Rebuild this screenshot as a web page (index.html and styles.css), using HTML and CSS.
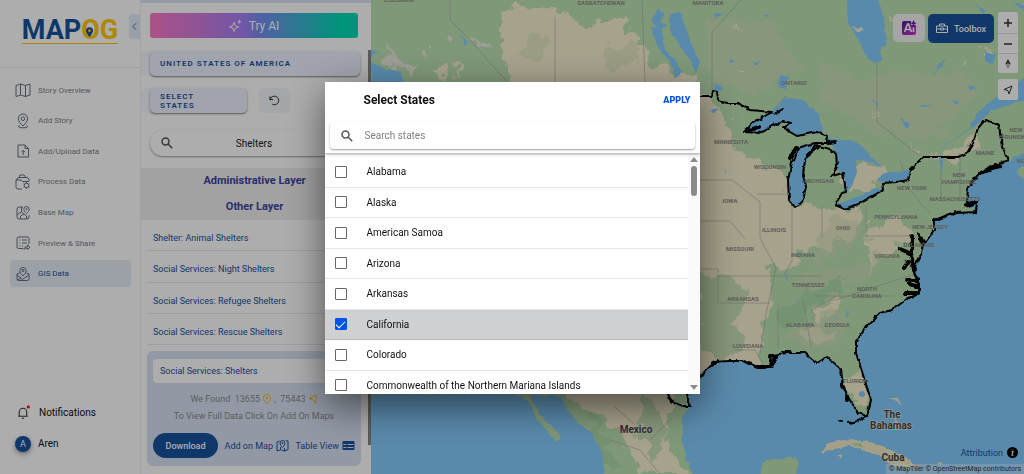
FILE: index.html
```html
<!DOCTYPE html>
<html lang="en">
<head>
<meta charset="utf-8">
<meta name="viewport" content="width=device-width, initial-scale=1">
<title>MAPOG - GIS Data</title>
<link rel="stylesheet" href="styles.css">
</head>
<body>
<div class="app">
  <aside class="sidebar">
    <div class="brand">
      <a class="logo" href="#"><span>MAP</span><span class="logo-og">OG</span>
        <svg class="logo-pin" viewBox="0 0 8 11"><path d="M4 0a4 4 0 0 0-4 4c0 3 4 7 4 7s4-4 4-7a4 4 0 0 0-4-4z" fill="#19519c"/><circle cx="4" cy="4" r="1.6" fill="#ffc800"/></svg>
      </a>
      <button class="collapse" aria-label="Collapse menu"><svg viewBox="0 0 6 10"><path d="M5 1 1 5l4 4"/></svg></button>
    </div>
    <nav class="menu">
      <a href="#" class="menu-item"><svg viewBox="0 0 16 16"><path d="M1 3.500 5.500 2v11L1 14.500zM5.500 2l5 1.500v11l-5-1.500M10.500 3.500 15 2v11l-4.500 1.500"/></svg>Story Overview</a>
      <a href="#" class="menu-item"><svg viewBox="0 0 16 16"><path d="M8 13C5 10 3.300 8 3.300 5.700a4.700 4.700 0 0 1 9.400 0C12.700 8 11 10 8 13z"/><circle cx="8" cy="5.700" r="1.800"/><path d="M5 12.500c-3 .8-2 2.300 3 2.300s6-1.500 3-2.300"/></svg>Add Story</a>
      <a href="#" class="menu-item"><svg viewBox="0 0 16 16"><path d="M3 2h7l3.500 3.500V14H3zM10 2v3.500h3.500M8.200 12V7.500M6.300 9.200l1.900-1.900 1.900 1.900"/></svg>Add/Upload Data</a>
      <a href="#" class="menu-item"><svg viewBox="0 0 16 16"><path d="M7 15H3a2 2 0 0 1-2-2V6h5l1.500 1.500H14M2 6V4.500l2-1h8.500L14 5v2M4 3.500 5 1h4l2 2.500"/><circle cx="11.500" cy="11.500" r="2.300"/><path d="M11.500 8v1.200m0 4.600V15m-3-5.200 1 .600m4 2.300 1 .600m0-3.500-1 .600m-4 2.300-1 .600"/></svg>Process Data</a>
      <a href="#" class="menu-item"><svg viewBox="0 0 16 16"><path d="M8 2H4a2 2 0 0 0-2 2v8a2 2 0 0 0 2 2h8a2 2 0 0 0 2-2v-2M6.500 2v5L2 9.500M5.500 14v-3L9 9l2.500 2v3M6.500 7 9 9"/><path d="M11.500 8.500C10 7 8.800 6 8.800 4.200a2.700 2.700 0 0 1 5.400 0C14.200 6 13 7 11.500 8.500z"/><circle cx="11.500" cy="4.200" r=".6"/></svg>Base Map</a>
      <a href="#" class="menu-item"><svg viewBox="0 0 16 16"><path d="M8 13.500H3.500A1.500 1.500 0 0 1 2 12V3.500A1.500 1.500 0 0 1 3.500 2h9A1.500 1.500 0 0 1 14 3.500V9M4.500 5h1M4.500 8h1M4.500 11h1M7 5h5M7 8h5M7 11h1M9 14.500c0-2 1.500-3 3.500-3V10l2.500 2.200-2.500 2.200V13c-1.500 0-2.500.2-3.500 1.500z"/></svg>Preview &amp; Share</a>
      <a href="#" class="menu-item active"><svg viewBox="0 0 16 16"><path d="M8 10C6 8 4.800 6.500 4.800 4.700a3.200 3.200 0 0 1 6.400 0C11.200 6.500 10 8 8 10z"/><circle cx="8" cy="4.500" r="1"/><path d="M4.500 7 2 8v5a1.500 1.500 0 0 0 1.500 1.500h9A1.500 1.500 0 0 0 14 13V8l-2.500-1M2 9l4 3 2 2.500M14 9l-6 4M2.500 14 6 12"/></svg>GIS Data</a>
    </nav>
    <div class="account">
      <a href="#" class="account-item"><svg class="bell" viewBox="0 0 14 14"><path d="M2 10.500h9M3 10.500V6.500a3.500 3.500 0 0 1 7 0v4M5.500 12.300h2"/><circle cx="11.500" cy="1.800" r="1.500"/></svg>Notifications</a>
      <a href="#" class="account-item"><span class="avatar">A</span>Aren</a>
    </div>
  </aside>

  <section class="panel">
    <button class="try-ai"><svg viewBox="0 0 14 14"><path d="M5.500 3.500 6.800 7 10.500 8.500 6.800 9.800 5.500 13.500 4.200 9.800.5 8.500 4.200 7zM11 1v4M9 3h4"/></svg>Try AI</button>
    <div class="field-wrap"><button class="field">UNITED STATES OF AMERICA</button></div>
    <div class="row">
      <div class="field-wrap short"><button class="field">SELECT STATES</button></div>
      <button class="reset" aria-label="Reset"><svg viewBox="0 0 12 12"><path d="M1 1.500v3.500h3.500M1.300 5a4.700 4.700 0 1 1 2.200 5"/></svg></button>
    </div>
    <label class="search layer-search">
      <svg viewBox="0 0 12 12"><circle cx="4.500" cy="4.500" r="3.500"/><path d="m7.200 7.200 4 4"/></svg>
      <input type="text" value="Shelters" aria-label="Search layers">
    </label>
    <div class="band"><h2>Administrative Layer</h2><h2>Other Layer</h2></div>
    <div class="layers">
      <a href="#">Shelter: Animal Shelters</a>
      <a href="#">Social Services: Night Shelters</a>
      <a href="#">Social Services: Refugee Shelters</a>
      <a href="#">Social Services: Rescue Shelters</a>
    </div>
    <div class="card">
      <a href="#" class="card-title">Social Services: Shelters</a>
      <p>We Found &nbsp;13655 <svg viewBox="0 0 10 10"><path d="M5 9.500C2.500 7.500 1.300 6 1.300 4.200a3.700 3.700 0 0 1 7.400 0C8.700 6 7.500 7.500 5 9.500zM5 2.800v2.800M3.600 4.200h2.800"/></svg>, &nbsp;75443 <svg viewBox="0 0 10 10"><path d="M1 4.500 8.500 1.200 7.500 9 4.500 5.500zM8 1l1.300 1M1.500 3.500l3.300 2M7 8.500l1.500.8"/></svg></p>
      <p>To View Full Data Click On Add On Maps</p>
      <div class="actions">
        <button class="download">Download</button>
        <button class="link-btn">Add on Map<svg class="stroke" viewBox="0 0 13 13"><path d="M3.500 2 1 3v9l3.500-1.300L8.500 12l3.500-1.300V2L9.700 1.500M4.500 10.500V8M8.500 12V9"/><path d="M6.500 8.500C4.800 6.800 4 5.500 4 4a2.500 2.500 0 0 1 5 0c0 1.500-.8 2.800-2.500 4.500z"/><circle cx="6.500" cy="4" r=".6"/></svg></button>
        <button class="link-btn">Table View<svg viewBox="0 0 13 10"><rect x=".5" y=".5" width="12" height="9" rx="1" fill="#19519c"/><path d="M1.500 4h3M5.500 4h6M1.500 7h3M5.500 7h6" stroke="#d7e2f4" stroke-width="1"/></svg></button>
      </div>
    </div>
    <div class="panel-scroll"></div>
  </section>

  <main class="map">
    <svg class="map-art" viewBox="371 0 653 474" preserveAspectRatio="xMinYMin slice">
      <defs>
        <filter id="rough" x="-5%" y="-5%" width="110%" height="110%" color-interpolation-filters="sRGB"><feTurbulence type="fractalNoise" baseFrequency=".07" numOctaves="4" seed="4"/><feDisplacementMap in="SourceGraphic" scale="22" xChannelSelector="R" yChannelSelector="G"/></filter>
        <filter id="coast" x="-5%" y="-5%" width="110%" height="110%" color-interpolation-filters="sRGB"><feTurbulence type="fractalNoise" baseFrequency=".16" numOctaves="2" seed="9"/><feDisplacementMap in="SourceGraphic" scale="4" xChannelSelector="R" yChannelSelector="G"/></filter>
      </defs>
      <rect x="371" width="653" height="474" fill="#bce0b2"/>
      <g filter="url(#rough)">
        <path fill="#f7efcf" d="M503 12 516 4 535 7 555 10 575 20 586 30 598 20 626 20 627 32 640 34 630 45 645 50 654 70 690 78 700 96 716 105 728 125 735 148 755 160 785 175 790 205 835 208 858 206 862 222 832 248 800 250 790 270 768 262 772 290 764 330 760 365 715 365 690 380 670 410 665 440 690 474 640 474 625 440 600 415 562 395 513 90 505 50 498 22z"/>
        <path fill="#f7efcf" d="M648 62l18 6 8 14-18-6zM838 176l30-18 22 12-12 14-24 12zM925 157l40-4 8-20 8-8-6 28-20 8zM870 228l30-12 14 20-24 10-22 30zM800 330l18-6 14 12-10 12zM812 310l16-14 12 6-18 20zM700 340l30 14-20 12-10 8zM846 378l14-6 8 22-6 14-10-14z"/>
        <g opacity=".55">
          <path fill="#d4dfb8" d="M710 20h60l30 50-40 24-50-14zM820 60l40 20 50-10 30 30-20 40-50-10-50-30zM900 90l60-20 20 20-50 50zM600 50l30-8 10 20-30 14zM530 36l20 6-8 20-24-4zM840 215l26 10-20 24-34 20 6-30zM790 280l60-16 40-14-20 30-60 16zM780 340l50-30 20 10-20 30z"/>
          <path fill="#9fd3a0" d="M640 395l16 8 10 30-12 30-12-30zM584 404l14 20 20 40-8 10-12-22zM700 275l34 5 16 20-24 30-26-8zM700 325l30 0 20 20-30 14-20-10zM775 310l40-20 30-14-10 24-50 30z"/>
        </g>
        <path fill="#e9e8dc" d="M384 42l6 10 6 8 8 4 10 6-2 8-16-12-10-6zM446 28l8 2 0 8-8-4zM470 38l14 4 6 10-12-4z"/>
        <path fill="#f7efcf" d="M436 66l12 0-2 14-4-6zM422 48l4 0 0 12zM456 64l4 2-2 14zM730 25l10 2 0 3zM732 68l12 4 0 4zM872 110l4 10-2 4zM963 62l6 4-2 4zM905 143l14 2-4 4zM982 50l6 4 0 5zM890 18l8 4-6 4z"/>
      </g>
      <g class="borders">
        <path d="M450 0v20l20 20 30 34 10 10M555 17v65M642 0l3 82M741 0 712 32v60M877 62v60l25 20 18 14M772 112l13-16 33 36M700 180h32M700 221h30l15 18M700 269h18v34M718 276h104M757 194h36M792 207v54l-8 14M822 206v32M866 206v30h54M835 300l80-26M720 303h50M778 303v46M803 300l8 46M835 296l-24 15M735 350h20l8 14M941 160v40M960 155v42M815 296h80M732 180l28 22 0 36 16 30-10 46-6 40M900 160l10 30 20 24M635 425l-20-18M650 440l22-22M610 440l30 10 20 24"/>
      </g>
      <g class="water" filter="url(#coast)">
        <path d="M368 394H516L530 403 537 420 549 433 557 442 561 436 539 413 530 396H562L564 405 577 422 591 433 603 453 604 478H368z"/>
        <path d="M695 478 685 457 682 437 682 417 690 407 687 393 699 377 712 365 728 361 745 361 757 367 770 367 772 355 787 353 805 353 817 363 827 357 841 369 843 385 848 397 858 413 867 416 871 400 864 378 856 353 856 342 866 327 880 313 892 310 907 299 919 293 919 283 913 270 920 257 923 245 918 233 925 243 934 230 934 220 957 213 976 212 967 203 968 187 978 175 988 170 1008 161 1028 151V478z"/>
        <path d="M795 207 789 200 788 180 792 165 800 148 812 144 818 146 808 160 803 172 806 188 803 203zM744 132 753 123 772 112 785 97 803 100 818 113 824 134 797 135 783 128 791 122 783 123 760 133zM827 138 857 142 872 157 882 168 870 162 856 160 857 173 850 190 842 193 846 180 837 167 836 153zM835 205 857 197 877 188 883 190 860 203 845 209zM875 181 885 173 908 170 908 180 897 182zM847-2 848 23 860 43 867 58 875 63 882 60 880 50 887 43 883 17 878-2zM1028 75 1007 90 983 107 967 130 928 157 973 127 993 110 1028 99z"/>
        <path d="M670 14l10-2 10 28 10 22-4 12-6-14-10-14-10-16zM650 27l12 1 3 22 10 10 7 12-7 6-4-16-12-12zM658 8l6 6-4 8 8 4-10 2-6-6zM371 62l12 6 18 4 2 12H371zM371 50l8 2-8 4zM460 34l8 10-3 1zM714 13l10 1-8 3zM762 14l8 1-4 2zM730 58l4 4-4 1zM752 63l10-3-6 5zM780 75l8 2-2 12-8-2zM933 78l6-14 8-6-8 10zM868 98l10 4 0 3zM920 104l12 2-10 1zM900 118l10 6-2 6zM951 100l8 2-2 3zM968 86l10 2-8 2zM985 52l10 3-2 10-8-4zM975 4l10 6-2 4zM1012 0l12 12V6zM714 82l8 6-6 6zM710 110l8-2-4 6zM833 315l3 4 3 1zM785 270l2 12 1-2zM790 297l8 3-2 1zM940 158h3l-1 18zM846 310l3 5-2 2zM725 167l2 7-2 0z"/>
      </g>
      <g filter="url(#coast)" fill="#f1ecc8">
        <path d="M822 453 828 443 849 439 870 442 887 448 907 458 916 467 891 466 882 457 870 453 849 445zM838 454l4 0-1 4zM886 398l12 0 4 8-6-6zM892 425l4-8 4 12-4 2zM937 463l5 0-2 3z"/>
        <path fill="#bce0b2" d="M762 465 766 460 791 457 799 462 795 478 760 478zM851 443l10 0 2 6zM1028 164 1017 170 1020 178 1028 180z"/>
        <path fill="#f7efcf" d="M852 26l12 3-6 4z"/>
        <path fill="#e6eecb" d="M936 220 957 213 950 211z"/>
      </g>
      <circle cx="862" cy="394" r="3" fill="#84cbfd"/>
      <g class="outline" filter="url(#coast)">
        <path d="M695 96H712L713 91 717 92 718 100 727 103 737 103 750 110 772 112 753 123 744 132 760 133 772 126 783 121 791 123 783 128 797 136 817 132 828 136 827 142 834 143 815 143 800 147 792 162 788 180 789 200 795 207 802 203 806 187 803 175 805 160 815 145 827 148 836 153 837 167 832 176 843 173 846 192 842 193 835 205 845 209 860 203 883 190 882 183 897 182 908 180 910 170 923 157H958L967 153 973 143 978 128 985 120 999 125 1002 147 1008 160 988 168 978 175 968 187 967 203 977 201 976 212 957 213 934 220 934 230 925 243 918 233 923 245 920 257 913 270 919 283 919 293 907 299 892 310 880 313 866 327 856 342 856 353 864 378 871 400 867 416 858 413 848 397 843 385 841 369 827 357 817 363 805 353 787 353 772 355 770 367 757 367 745 361 728 361 715 362 699 377"/>
        <path d="M667 394 671 402 687 407 690 407 687 394M849 423 858 421 867 416M840 421h1M936 220 956 211M774 114l9-5" />
        <path stroke-width="4" d="M912 236v18l-12-5M911 254l3 16M908 262l-4 6M917 280h-10M918 293h-13M917 286l-8-2M980 173l12-5 8-2M966 206l10-4M770 356l6 0-4 10M784 352l6 0M842 382v4M847 396v4M790 158l6-10M808 155l10-8M745 361l4 2M757 367l8 0M713 363l4-2M747 131l12-4M828 143l6-1"/>
      </g>
      <g class="labels">
        <text x="399" y="2">COLUMBIA</text><text x="601" y="5">SASKATCHEWAN</text><text x="708" y="5">MANITOBA</text>
        <text x="794" y="85">ONTARIO</text><text x="731" y="144">MINNESOTA</text><text x="770" y="169">WISCONSIN</text><text x="819" y="183">MICHIGAN</text><text x="730" y="203">IOWA</text><text x="774" y="232">ILLINOIS</text><text x="843" y="230">OHIO</text><text x="740" y="251">MISSOURI</text><text x="803" y="257">INDIANA</text><text x="808" y="287">TENNESSEE</text><text x="743" y="301">ARKANSAS</text><text x="867" y="291">NORTH</text><text x="867" y="298">CAROLINA</text><text x="887" y="258">VIRGINIA</text><text x="919" y="247">DELAWARE</text><text x="930" y="229">NEW JERSEY</text><text x="896" y="219">PENNSYLVANIA</text><text x="912" y="190">NEW YORK</text><text x="955" y="201">MASSACHUSETTS</text><text x="959" y="177">NEW</text><text x="959" y="184">HAMPSHIRE</text><text x="985" y="155">MAINE</text><text x="1016" y="132">NEW</text><text x="1018" y="139">BRUNSWICK</text><text x="1025" y="163">NOVA</text><text x="800" y="327">ALABAMA</text><text x="837" y="327">GEORGIA</text><text x="748" y="348">LOUISIANA</text><text x="855" y="383">FLORIDA</text>
        <g class="countries"><text x="636" y="433">Mexico</text><text x="892" y="418">The</text><text x="891" y="429">Bahamas</text><text x="893" y="461">Cuba</text></g>
      </g>
    </svg>
    <div class="map-tools">
      <button class="ai-btn" aria-label="AI"><svg viewBox="0 0 16 16"><defs><linearGradient id="ai" x1="0" y1="0" x2="1" y2="1"><stop offset="0" stop-color="#4b1a9c"/><stop offset="1" stop-color="#d638c8"/></linearGradient></defs><path d="M3 1h7v4h5v8a2 2 0 0 1-2 2H3a2 2 0 0 1-2-2V3a2 2 0 0 1 2-2z" fill="url(#ai)"/><path d="m3.500 12 3-8h1l3 8M4.500 9.500h5M12.500 7.500V12" fill="none" stroke="#fff" stroke-width="1.600"/><path d="m12.500 0 .9 2.300 2.300.9-2.300.9-.9 2.300-.9-2.300-2.300-.9 2.300-.9z" fill="#5a1fa0"/></svg></button>
      <button class="toolbox"><svg viewBox="0 0 12 11"><path d="M.5 3h11v6.500H.5zM3.500 3V1h5v2M.5 6h4M7.500 6h4M4.500 5h3v2h-3z"/></svg>Toolbox</button>
      <div class="controls">
        <div class="control-group">
          <button aria-label="Zoom in"><svg viewBox="0 0 10 10"><path d="M5 1v8M1 5h8"/></svg></button>
          <button aria-label="Zoom out"><svg viewBox="0 0 10 10"><path d="M1 5h8"/></svg></button>
          <button aria-label="Reset north"><svg viewBox="0 0 10 12"><path d="M5 0 8 6H2z" fill="#333" stroke="none"/><path d="M5 12 8 6H2z" fill="#aaa" stroke="none"/><circle cx="5" cy="6" r="1" fill="#fff" stroke="none"/></svg></button>
        </div>
        <div class="control-group"><button aria-label="My location"><svg class="thin" viewBox="0 0 10 10"><path d="M1 4.500 9 1 6 9 5 5.500z"/></svg></button></div>
      </div>
    </div>
    <footer class="credits">
      <a href="#" class="attribution">Attribution<svg viewBox="0 0 12 12"><circle cx="6" cy="6" r="6"/><path d="M5 5h1.500L5.500 9H7M6.500 2.800v.8" stroke="#eee" stroke-width="1.300" fill="none"/></svg></a>
      <div class="copyright"><a href="#">© MapTiler</a> <a href="#">© OpenStreetMap contributors</a></div>
    </footer>
  </main>
</div>

<div class="backdrop">
  <div class="dialog" role="dialog" aria-modal="true" aria-labelledby="dialog-title">
    <header class="dialog-head">
      <div class="title-row"><h1 id="dialog-title">Select States</h1><button class="apply">APPLY</button></div>
      <label class="search state-search">
        <svg viewBox="0 0 12 12"><circle cx="4.500" cy="4.500" r="3.500"/><path d="m7.200 7.200 4 4"/></svg>
        <input type="text" placeholder="Search states" aria-label="Search states">
      </label>
    </header>
    <div class="dialog-body">
      <div class="states">
        <label class="state"><input type="checkbox">Alabama</label>
        <label class="state"><input type="checkbox">Alaska</label>
        <label class="state"><input type="checkbox">American Samoa</label>
        <label class="state"><input type="checkbox">Arizona</label>
        <label class="state"><input type="checkbox">Arkansas</label>
        <label class="state selected"><input type="checkbox" checked>California</label>
        <label class="state"><input type="checkbox">Colorado</label>
        <label class="state"><input type="checkbox">Commonwealth of the Northern Mariana Islands</label>
      </div>
      <div class="scrollbar" aria-hidden="true"><i class="up"></i><i class="thumb"></i><i class="down"></i></div>
    </div>
  </div>
</div>
</body>
</html>
```
FILE: styles.css
```css
* { box-sizing: border-box; }
body { margin: 0; font-family: Roboto, "Liberation Sans", sans-serif; font-size: 10px; color: #111; overflow: hidden; }
button { font: inherit; border: 0; padding: 0; background: none; cursor: pointer; }
input { font: inherit; }
a { color: inherit; text-decoration: none; }
h1, h2, p { margin: 0; }
svg { display: block; flex: none; }

.app { display: grid; grid-template-columns: 140px 231px 1fr; height: 100vh; background: #fff; }

/* Sidebar */
.sidebar { display: flex; flex-direction: column; min-height: 0; }
.brand { display: flex; justify-content: space-between; align-items: flex-start; height: 68px; padding: 14px 0 0 22px; border-bottom: 1px solid #e6e6e6; }
.logo { position: relative; display: flex; justify-content: center; width: 96px; height: 30px; border-bottom: 1px solid #ffc800; font: 700 27px/32px Roboto, sans-serif; color: #19519c; }
.logo-og { color: #ffc800; }
.logo-pin { position: absolute; left: 64px; top: 13px; width: 7px; height: 10px; }
.collapse { display: grid; place-items: center; width: 11px; height: 25px; background: #e4ecf6; border-radius: 3px 0 0 3px; }
.collapse svg { width: 5px; height: 9px; fill: none; stroke: #19519c; }
.menu { display: grid; grid-auto-rows: 1fr; height: 214px; margin-top: 7px; padding: 0 9px 0 10px; align-items: center; }
.menu-item { display: flex; align-items: center; gap: 7px; height: 27px; padding-left: 5px; border-radius: 4px; font-size: 8px; color: #7d828b; }
.menu-item svg { width: 16px; height: 16px; fill: none; stroke: #666e82; stroke-width: 1; }
.menu-item.active { background: #e6edf7; color: #19519c; }
.account { display: grid; gap: 14px; margin-top: auto; padding: 0 0 22px 15px; }
.account-item { display: flex; align-items: center; gap: 7px; height: 17px; }
.bell { width: 17px; height: 15px; fill: none; stroke: #333; }
.bell circle { fill: #e02020; stroke: none; }
.avatar { display: grid; place-items: center; width: 16px; height: 16px; border-radius: 50%; background: #19519c; color: #fff; font-size: 9px; box-shadow: 0 2px 5px rgba(0,0,0,.4); }

/* Layer panel */
.panel { position: relative; min-height: 0; overflow: hidden; padding-top: 10px; border-top: 3px solid #dbe5f5; border-left: 1px solid #f2f2f2; }
.try-ai { display: flex; align-items: center; justify-content: center; gap: 7px; width: 208px; height: 25px; margin-left: 9px; border-radius: 3px; background: linear-gradient(90deg, #ff79c6, #a580f5 45%, #7a8cf5 52%, #00dcb4 92%); color: #fff; font-size: 12px; }
.try-ai svg { width: 13px; height: 13px; fill: none; stroke: #fff; stroke-width: 1; }
.field-wrap { width: 219px; margin-top: 13px; padding-left: 9px; border-radius: 6px; background: #f5f8ff; }
.field { display: block; width: 100%; height: 25px; padding: 0 50px 0 10px; border-radius: 5px; background: #edf2ff; box-shadow: 0 1px 2px rgba(0,0,0,.5); color: #19519c; font-size: 8px; line-height: 9px; font-weight: 600; letter-spacing: 1px; text-align: left; white-space: nowrap; }
.row { display: flex; gap: 12px; margin-top: 12px; }
.short { width: 106px; margin-top: 0; }
.short .field { white-space: normal; padding-right: 40px; }
.reset { display: grid; place-items: center; width: 31px; height: 25px; border-radius: 5px; background: #f3f5fb; }
.reset svg { width: 11px; height: 11px; fill: none; stroke: #222; stroke-width: 1; }
.search { display: flex; align-items: center; background: #fff; box-shadow: 0 1px 2px rgba(0,0,0,.4); }
.search svg { width: 12px; height: 12px; fill: none; stroke: #555; stroke-width: 1.500; }
.search input { flex: 1; min-width: 0; border: 0; outline: 0; background: none; color: #222; }
.layer-search { width: 209px; height: 26px; margin: 17px 0 0 9px; padding: 0 11px; border-radius: 13px; }
.layer-search input { text-align: center; padding: 0 13px 0 0; }
.band { display: grid; grid-auto-rows: 1fr; align-items: center; margin-top: 12px; width: 227px; height: 52px; background: #efefef; }
.band h2 { font-size: 11px; line-height: 14px; font-weight: 700; text-align: center; color: #3c44a0; }
.layers { display: grid; grid-auto-rows: 1fr; width: 214px; height: 125px; margin-left: 6px; }
.layers a { padding: 13px 6px 0; border-bottom: 1px solid #e8e8e8; font-size: 9px; line-height: 11px; color: #19519c; }
.card { width: 214px; margin: 6px 0 0 6px; padding: 8px 6px; border-radius: 6px; background: #d7e2f4; }
.card-title { display: block; padding: 0 7px; border-radius: 4px; background: #fff; color: #19519c; font-size: 9px; line-height: 24px; }
.card p { display: flex; justify-content: center; gap: 2px; margin-top: 11px; font-size: 9px; line-height: 11px; color: #8a8a8a; }
.card p + p { margin-top: 6px; }
.card p svg { width: 10px; height: 10px; fill: none; stroke: #f5b41d; }
.actions { display: flex; align-items: center; justify-content: space-between; margin-top: 11px; }
.download { width: 65px; height: 25px; border-radius: 13px; background: #19519c; color: #fff; font-size: 9px; font-weight: 500; }
.link-btn { display: flex; align-items: center; gap: 3px; color: #19519c; font-size: 9px; }
.link-btn svg { width: 13px; height: 13px; }
.link-btn .stroke { fill: none; stroke: #19519c; }
.panel-scroll { position: absolute; right: 0; top: 47px; bottom: 29px; width: 3px; background: #858585; }

/* Map */
.map { position: relative; min-width: 0; overflow: hidden; background: #84cbfd; }
.map-art { width: 100%; height: 100%; }
.water { fill: #84cbfd; }
.borders { fill: none; stroke: #a3a6a0; stroke-width: 1; opacity: .6; }
.outline { fill: none; stroke: #000; stroke-width: 2; stroke-linejoin: round; stroke-linecap: round; }
.labels { font-size: 6px; font-weight: 700; text-anchor: middle; fill: #8d8d88; }
.countries { font-size: 10px; font-weight: 700; fill: #444; stroke: #f3eed8; stroke-width: 1px; paint-order: stroke; }
.map-tools { position: absolute; top: 12px; right: 6px; display: flex; align-items: flex-start; gap: 3px; }
.ai-btn { display: grid; place-items: center; width: 32px; height: 28px; margin-top: 2px; border-radius: 5px; background: #f4f4f4; }
.ai-btn svg { width: 16px; height: 16px; }
.toolbox { display: flex; align-items: center; justify-content: center; gap: 6px; width: 66px; height: 29px; margin-top: 2px; border-radius: 5px; background: #19519c; color: #fff; font-size: 9px; font-weight: 500; }
.toolbox svg { width: 12px; height: 11px; fill: none; stroke: #fff; stroke-width: 1; }
.controls { display: grid; gap: 6px; margin-left: 1px; }
.control-group { display: grid; width: 20px; border-radius: 2px; background: #fff; overflow: hidden; }
.control-group button { display: grid; place-items: center; height: 21px; }
.control-group button + button { border-top: 1px solid #ddd; height: 20px; }
.control-group svg { width: 10px; height: 10px; fill: none; stroke: #333; stroke-width: 1.500; }
.control-group svg.thin { stroke-width: 1; }
.credits { position: absolute; right: 0; bottom: 0; display: grid; justify-items: end; gap: 6px; }
.attribution { display: flex; align-items: center; gap: 4px; margin-right: 6px; font-size: 9px; color: #19519c; }
.attribution svg { width: 11px; height: 11px; }
.copyright { padding: 0 3px; background: rgba(255,255,255,.35); font-size: 7px; line-height: 10px; color: #333; white-space: nowrap; }

/* State picker */
.backdrop { position: fixed; inset: 0; display: grid; place-items: center; padding-top: 2px; background: rgba(0,0,0,.32); }
.dialog { display: flex; flex-direction: column; width: 375px; max-width: 96%; height: 312px; overflow: hidden; background: #fff; box-shadow: 0 12px 36px rgba(0,0,0,.55); }
.dialog-head { position: relative; padding: 0 5px 4px; box-shadow: 0 1px 3px rgba(0,0,0,.4); }
.title-row { display: flex; align-items: center; justify-content: space-between; height: 36px; padding: 0 4px 0 34px; }
h1 { font-size: 12px; font-weight: 700; }
.apply { color: #0054e9; font-size: 9px; font-weight: 900; }
.state-search { height: 27px; margin-top: 4px; padding: 0 11px; gap: 12px; border-radius: 4px; }
.state-search input { padding: 0; }
.state-search input::placeholder { color: #808080; }
.dialog-body { flex: 1; display: flex; min-height: 0; }
.states { flex: 1; display: grid; grid-auto-rows: 1fr; height: 244px; margin-top: 4px; }
.state { display: flex; align-items: center; gap: 20px; padding-left: 10px; border-bottom: 1px solid #e6e6e6; }
.state input { appearance: none; display: grid; place-items: center; width: 12px; height: 12px; margin: 0; border: 1px solid #666; border-radius: 1px; background: #fff; }
.state input:checked { border-color: #0054e9; background: #0054e9; }
.state input:checked::after { content: ""; width: 8px; height: 4px; margin-bottom: 2px; border: solid #fff; border-width: 0 0 1px 1px; transform: rotate(-45deg); }
.state.selected { background: #cfd0d2; border-color: #bbb; }
.scrollbar { display: flex; flex-direction: column; align-items: center; width: 12px; padding: 4px 0; background: #fafafa; }
.scrollbar i { display: block; }
.up, .down { border: 4px solid transparent; }
.up { border-top: 0; border-bottom: 5px solid #8b8b8b; }
.down { margin-top: auto; border-bottom: 0; border-top: 5px solid #8b8b8b; }
.thumb { width: 6px; height: 30px; margin-top: 4px; border-radius: 3px; background: #8b8b8b; }
```
